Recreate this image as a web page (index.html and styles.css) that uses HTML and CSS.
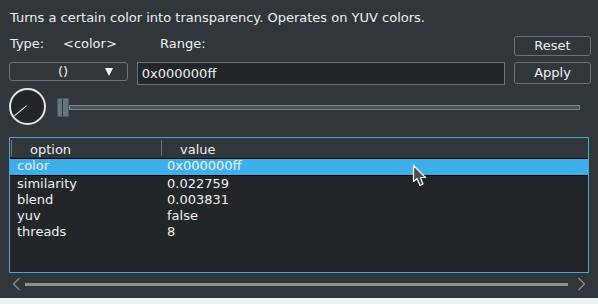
FILE: index.html
```html
<!DOCTYPE html>
<html lang="en">
<head>
    <meta charset="UTF-8">
    <title>colorkey</title>
    <link rel="stylesheet" href="styles.css">
</head>
<body>

<div class="panel">
    <p class="desc">Turns a certain color into transparency. Operates on YUV colors.</p>

    <div class="row row-type">
        <span class="lbl type-lbl">Type:</span>
        <span class="lbl type-val">&lt;color&gt;</span>
        <span class="lbl range-lbl">Range:</span>
        <button class="btn">Reset</button>
    </div>

    <div class="row row-edit">
        <div class="combo"><span class="combo-text">()</span><span class="combo-arrow"></span></div>
        <div class="field">0x000000ff</div>
        <button class="btn btn-apply">Apply</button>
    </div>

    <div class="row row-dial">
        <div class="dial"><span class="needle"></span></div>
        <div class="slider">
            <span class="handle"></span>
            <span class="groove"></span>
        </div>
    </div>

    <div class="table">
        <div class="thead">
            <div class="th th-option">option</div>
            <div class="th th-value">value</div>
        </div>
        <div class="tr selected"><span class="c1">color</span><span class="c2">0x000000ff</span></div>
        <div class="tr"><span class="c1">similarity</span><span class="c2">0.022759</span></div>
        <div class="tr"><span class="c1">blend</span><span class="c2">0.003831</span></div>
        <div class="tr"><span class="c1">yuv</span><span class="c2">false</span></div>
        <div class="tr"><span class="c1">threads</span><span class="c2">8</span></div>
    </div>

    <div class="hscroll">
        <svg class="arrow" width="10" height="14" viewBox="0 0 10 14">
            <polyline points="8.5,1 2.5,7 8.5,13" fill="none" stroke="#8f9294" stroke-width="1.2"/>
        </svg>
        <span class="track"></span>
        <svg class="arrow" width="10" height="14" viewBox="0 0 10 14">
            <polyline points="1.5,1 7.5,7 1.5,13" fill="none" stroke="#8f9294" stroke-width="1.2"/>
        </svg>
    </div>

    <svg class="cursor" width="16" height="24" viewBox="0 0 16 24">
        <path d="M1.5 1.5 L1.5 17.5 L5 14.5 L8 21.5 L11 20 L8.5 13.5 L13.5 13.5 Z" fill="#4d4d4d" stroke="#fcfcfc" stroke-width="1.2" stroke-linejoin="round"/>
    </svg>
</div>
<div class="strip"></div>

</body>
</html>
```

FILE: styles.css
```css
body {
    margin: 0;
    width: 598px;
    height: 304px;
    background: #eff0f1;
    font-family: "DejaVu Sans", sans-serif;
    font-size: 13px;
    color: #eff0f1;
    overflow: hidden;
}
.panel {
    position: relative;
    height: 298px;
    background: #31363b;
    padding: 0 7px 0 9px;
    box-sizing: border-box;
}
.desc {
    margin: 0;
    padding: 10px 0 0 1px;
    height: 31px;
    line-height: 16px;
    box-sizing: border-box;
}
.row {
    display: flex;
    align-items: flex-start;
}
.row-type {
    height: 31px;
    padding-top: 5px;
    box-sizing: border-box;
}
.lbl { line-height: 16px; }
.type-lbl { margin-left: 1px; width: 53px; }
.type-val { width: 97px; }
.range-lbl { flex: 1; }
.btn {
    width: 77px;
    height: 20px;
    margin-left: auto;
    margin-right: 0;
    padding: 0;
    background: #31363b;
    border: 1px solid #6e7175;
    border-radius: 3px;
    font-family: inherit;
    font-size: 13px;
    color: #eff0f1;
    line-height: 16px;
}
.row-edit {
    height: 26px;
}
.combo {
    width: 119px;
    height: 19px;
    border: 1px solid #6e7175;
    border-radius: 3px;
    box-sizing: border-box;
    display: flex;
    align-items: center;
}
.combo-text {
    margin-left: 48px;
    line-height: 16px;
}
.combo-arrow {
    margin-left: 37px;
    width: 0;
    height: 0;
    border-left: 4px solid transparent;
    border-right: 4px solid transparent;
    border-top: 8px solid #fcfcfc;
}
.field {
    width: 369px;
    height: 23px;
    margin-left: 9px;
    background: #232629;
    border: 1px solid #6e7175;
    box-sizing: border-box;
    padding: 2px 0 0 4px;
    line-height: 17px;
}
.btn-apply {
    height: 22px;
    margin-left: 9px;
}
.row-dial {
    height: 49px;
}
.dial {
    position: relative;
    width: 37px;
    height: 37px;
    border: 2px solid #e8e6e0;
    border-radius: 50%;
    background: #232629;
    box-sizing: border-box;
}
.needle {
    position: absolute;
    left: 16px;
    top: 16px;
    width: 16px;
    height: 1px;
    background: #eff0f1;
    transform-origin: 0 0;
    transform: rotate(140deg);
}
.slider {
    display: flex;
    align-items: center;
    margin-left: 11px;
    margin-top: 10px;
    width: 523px;
    height: 19px;
}
.handle {
    width: 12px;
    height: 19px;
    box-sizing: border-box;
    background: #66767a;
    border: 1px solid #4c5659;
    border-radius: 1px;
    position: relative;
}
.handle::after {
    content: "";
    position: absolute;
    left: 4px;
    top: 0;
    width: 1px;
    height: 17px;
    background: #31363b;
}
.groove {
    flex: 1;
    height: 5px;
    box-sizing: border-box;
    border: 1px solid #7d8a8a;
    background: #4c5659;
}
.table {
    width: 580px;
    height: 136px;
    border: 1px solid #4ca7d8;
    background: #232629;
    box-sizing: border-box;
}
.thead {
    display: flex;
    height: 20px;
    background: #31363b;
    align-items: flex-start;
    padding-top: 2px;
    box-sizing: border-box;
}
.th {
    line-height: 20px;
    border-left: 1px solid #6e7175;
    box-sizing: border-box;
    padding-left: 18px;
    height: 16px;
}
.th-option { width: 150px; margin-left: 1px; }
.th-value { flex: 1; }
.tr {
    display: flex;
    height: 16px;
    line-height: 16px;
}
.tr.selected {
    background: #3daee9;
    border-top: 1px solid #000;
    border-bottom: 1px solid #000;
    height: 16px;
    line-height: 14px;
}
.c1 { width: 150px; padding-left: 7px; }
.c2 { flex: 1; }
.hscroll {
    display: flex;
    align-items: center;
    height: 20px;
    margin-top: 1px;
}
.arrow { display: block; margin-left: 2px; }
.track {
    margin-left: 4px;
    width: 543px;
    height: 3px;
    background: #8f9294;
}
.hscroll .arrow:last-child { margin-left: 9px; }
.cursor {
    position: absolute;
    left: 412px;
    top: 164px;
}
.strip {
    height: 6px;
    background: #eff0f1;
}
```
